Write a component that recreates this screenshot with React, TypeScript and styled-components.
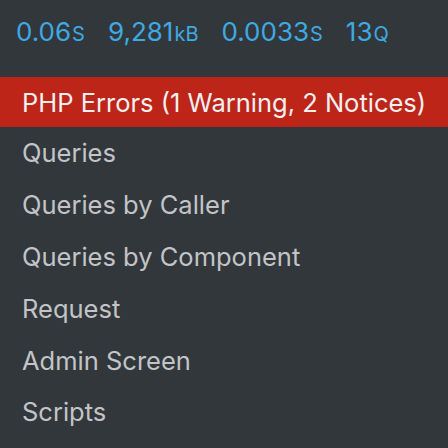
import * as React from "react";
import styled, { createGlobalStyle } from "styled-components";

const GlobalStyle = createGlobalStyle`
  html, body {
    margin: 0;
    padding: 0;
    background: #32373c;
  }
  body {
    font-family: Inter, "Noto Sans", sans-serif;
    -webkit-font-smoothing: antialiased;
  }
`;

const Panel = styled.div`
  width: 448px;
  height: 448px;
  background: #32373c;
  overflow: hidden;
`;

const StatsBar = styled.div`
  display: flex;
  align-items: baseline;
  gap: 23px;
  padding: 16px 16px 0 16px;
  height: 61px;
  box-sizing: border-box;
  color: #3fa9e2;
  font-size: 26px;
  line-height: 32px;
`;

const Stat = styled.span`
  white-space: nowrap;
`;

const Unit = styled.small`
  font-size: 20px;
  margin-left: 1px;
`;

const ErrorBar = styled.div`
  display: flex;
  align-items: center;
  height: 50px;
  margin-top: 16px;
  padding: 0 22px;
  background: #bd2519;
  color: #f0f0f1;
  font-size: 25.5px;
  white-space: nowrap;
`;

const Menu = styled.ul`
  list-style: none;
  margin: 0;
  padding: 0;
`;

const MenuItem = styled.li`
  height: 51.8px;
  display: flex;
  align-items: center;
  padding: 0 22px;
  color: #c3c4c7;
  font-size: 25.5px;
  white-space: nowrap;
`;

const stats = [
  { value: "0.06", unit: "S" },
  { value: "9,281", unit: "kB" },
  { value: "0.0033", unit: "S" },
  { value: "13", unit: "Q" },
];

const items = [
  "Queries",
  "Queries by Caller",
  "Queries by Component",
  "Request",
  "Admin Screen",
  "Scripts",
];

export default function App() {
  return (
    <Panel>
      <GlobalStyle />
      <StatsBar>
        {stats.map((s, i) => (
          <Stat key={i}>
            {s.value}
            <Unit>{s.unit}</Unit>
          </Stat>
        ))}
      </StatsBar>
      <ErrorBar>PHP Errors (1 Warning, 2 Notices)</ErrorBar>
      <Menu>
        {items.map((label) => (
          <MenuItem key={label}>{label}</MenuItem>
        ))}
      </Menu>
    </Panel>
  );
}
